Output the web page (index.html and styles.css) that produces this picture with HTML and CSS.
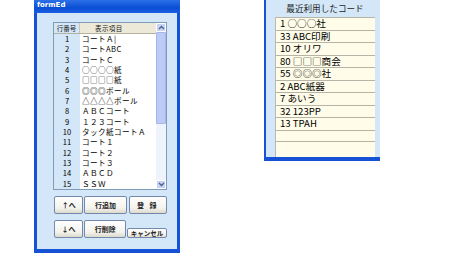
FILE: index.html
```html
<!DOCTYPE html>
<html lang="ja">
<head>
    <meta charset="UTF-8">
    <title>formEd</title>
    <link rel="stylesheet" href="styles.css">
</head>
<body>
    <div class="screen">
        <div class="form-window">
            <div class="title-bar">formEd</div>
            <div class="form-body">
                <div class="listbox">
                    <div class="grid">
                        <div class="grid-head">
                            <span class="col-no">行番号</span>
                            <span class="col-text">表示項目</span>
                        </div>
                        <div class="grid-row"><span class="col-no">1</span><span class="col-text">コートＡ|</span></div>
                        <div class="grid-row"><span class="col-no">2</span><span class="col-text">コートABC</span></div>
                        <div class="grid-row"><span class="col-no">3</span><span class="col-text">コートＣ</span></div>
                        <div class="grid-row"><span class="col-no">4</span><span class="col-text">○○○○紙</span></div>
                        <div class="grid-row"><span class="col-no">5</span><span class="col-text">□□□□紙</span></div>
                        <div class="grid-row"><span class="col-no">6</span><span class="col-text">◎◎◎ボール</span></div>
                        <div class="grid-row"><span class="col-no">7</span><span class="col-text">△△△△ボール</span></div>
                        <div class="grid-row"><span class="col-no">8</span><span class="col-text">ＡＢＣコート</span></div>
                        <div class="grid-row"><span class="col-no">9</span><span class="col-text">１２３コート</span></div>
                        <div class="grid-row"><span class="col-no">10</span><span class="col-text">タック紙コートＡ</span></div>
                        <div class="grid-row"><span class="col-no">11</span><span class="col-text">コート１</span></div>
                        <div class="grid-row"><span class="col-no">12</span><span class="col-text">コート２</span></div>
                        <div class="grid-row"><span class="col-no">13</span><span class="col-text">コート３</span></div>
                        <div class="grid-row"><span class="col-no">14</span><span class="col-text">ＡＢＣＤ</span></div>
                        <div class="grid-row"><span class="col-no">15</span><span class="col-text">ＳＳＷ</span></div>
                    </div>
                    <div class="scrollbar">
                        <div class="scroll-btn">
                            <svg width="7" height="5" viewBox="0 0 7 5"><path d="M1 4 L3.5 1.5 L6 4" fill="none" stroke="#4d6185" stroke-width="1.3"/></svg>
                        </div>
                        <div class="scroll-track">
                            <div class="scroll-thumb"></div>
                        </div>
                        <div class="scroll-btn">
                            <svg width="7" height="5" viewBox="0 0 7 5"><path d="M1 1 L3.5 3.5 L6 1" fill="none" stroke="#4d6185" stroke-width="1.3"/></svg>
                        </div>
                    </div>
                </div>

                <div class="btn-row">
                    <button class="btn btn-move">↑へ</button>
                    <button class="btn btn-wide">行追加</button>
                    <button class="btn btn-save">登 録</button>
                </div>
                <div class="btn-row">
                    <button class="btn btn-move">↓へ</button>
                    <button class="btn btn-wide">行削除</button>
                    <button class="btn btn-cancel">キャンセル</button>
                </div>
            </div>
        </div>

        <div class="recent-panel">
            <div class="recent-title">最近利用したコード</div>
            <div class="recent-list">
                <div class="recent-row">1 ○○○社</div>
                <div class="recent-row">33 ABC印刷</div>
                <div class="recent-row">10 オリワ</div>
                <div class="recent-row">80 □□□商会</div>
                <div class="recent-row">55 ◎◎◎社</div>
                <div class="recent-row">2 ABC紙器</div>
                <div class="recent-row">7 あいう</div>
                <div class="recent-row">32 123PP</div>
                <div class="recent-row">13 TPAH</div>
                <div class="recent-row"></div>
            </div>
        </div>
    </div>
</body>
</html>
```

FILE: styles.css
```css
:root {
    --xp-blue: #1652d6;
    --panel: #d3e7f9;
    --btn-border: #7488ac;
    --cream: #fffde9;
}

body {
    margin: 0;
    background: white;
    font-family: 'Noto Sans CJK JP', 'DejaVu Sans', sans-serif;
    color: #000;
}

.screen {
    display: flex;
    align-items: flex-start;
    gap: 84px;
    width: 450px;
    height: 253px;
    padding-left: 34px;
    box-sizing: border-box;
    overflow: hidden;
}

/* left form window */
.form-window {
    width: 146px;
    height: 253px;
    display: flex;
    flex-direction: column;
    background: var(--panel);
    border-left: 3px solid var(--xp-blue);
    border-right: 3px solid var(--xp-blue);
    border-bottom: 4px solid var(--xp-blue);
    box-sizing: border-box;
}

.title-bar {
    height: 13px;
    margin: 0 -3px;
    padding-left: 3px;
    background: linear-gradient(to bottom, #2b6fe8 0%, #0a4fd3 60%, #1a5ee2 100%);
    color: white;
    font-family: 'DejaVu Sans', sans-serif;
    font-size: 7px;
    font-weight: bold;
    line-height: 11px;
}

.form-body {
    padding: 9px 10px 0 16px;
    display: flex;
    flex-direction: column;
}

.listbox {
    display: flex;
    width: 114px;
    height: 168px;
    border: 1px solid #7f9db9;
    box-sizing: border-box;
    background: white;
}

.grid {
    flex: 1;
    display: flex;
    flex-direction: column;
}

.grid-head {
    display: flex;
    height: 10px;
    background: #ece9d8;
    border-bottom: 1px solid #b5b2a0;
    font-size: 6.5px;
    line-height: 10px;
    color: #222;
}

.grid-head .col-no {
    border-right: 1px solid #c8c5b4;
    box-sizing: border-box;
}

.grid-head .col-text {
    text-align: left;
    padding-left: 15px;
    background: transparent;
}

.grid-row {
    display: flex;
    height: 10.33px;
    font-size: 7.6px;
    line-height: 10.33px;
}

.col-no {
    width: 26px;
    flex: none;
    text-align: center;
    background: var(--panel);
}

.col-text {
    flex: 1;
    padding-left: 2px;
    letter-spacing: 0.4px;
    white-space: nowrap;
    overflow: hidden;
}

.scrollbar {
    width: 10px;
    flex: none;
    display: flex;
    flex-direction: column;
    background: #eef3fc;
}

.scroll-btn {
    height: 9px;
    display: flex;
    align-items: center;
    justify-content: center;
    background: #c6d3f7;
    border: 1px solid #fff;
    box-sizing: border-box;
    border-radius: 1px;
}

.scroll-track {
    flex: 1;
    display: flex;
    flex-direction: column;
}

.scroll-thumb {
    height: 92px;
    background: #bccbf5;
    border: 1px solid #a5b6e8;
    border-radius: 1px;
    box-sizing: border-box;
}

/* buttons */
.btn-row {
    display: flex;
    align-items: flex-end;
    gap: 1px;
    margin-top: 6px;
}

.btn {
    height: 18px;
    padding: 0;
    border: 1px solid var(--btn-border);
    border-radius: 2px;
    background: linear-gradient(to bottom, #ffffff 0%, #f3f2ec 70%, #dcd9cc 100%);
    font-family: 'Noto Sans CJK JP', sans-serif;
    font-size: 7px;
    font-weight: bold;
    color: #222;
    line-height: 16px;
}

.btn-move {
    width: 30px;
    margin-left: 1px;
}

.btn-wide {
    width: 43px;
}

.btn-save {
    width: 39px;
    margin-left: 1px;
    letter-spacing: 2px;
}

.btn-cancel {
    width: 41px;
    height: 10px;
    line-height: 8px;
    font-size: 6.5px;
}

/* right recent-code panel */
.recent-panel {
    width: 116px;
    height: 161px;
    background: var(--panel);
    border-left: 2px solid var(--xp-blue);
    border-bottom: 4px solid var(--xp-blue);
    box-sizing: border-box;
    padding: 0 5px 0 9px;
}

.recent-title {
    height: 17px;
    text-align: center;
    font-size: 8.6px;
    line-height: 16px;
    color: #222;
}

.recent-list {
    height: 140px;
    background: var(--cream);
    border-left: 1px solid #b9b9ad;
    box-sizing: border-box;
}

.recent-row {
    height: 12.5px;
    padding-left: 4px;
    border-top: 1px solid #b5b4a6;
    box-sizing: border-box;
    font-size: 9.6px;
    line-height: 11px;
    white-space: nowrap;
}

.recent-row:last-child {
    border-bottom: 1px solid #b5b4a6;
}
```
